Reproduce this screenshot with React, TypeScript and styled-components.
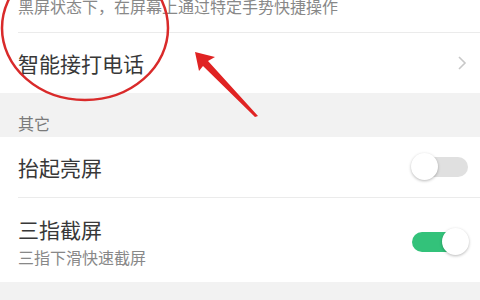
import React from "react";
import styled, { createGlobalStyle } from "styled-components";

const Global = createGlobalStyle`
  html, body { margin: 0; padding: 0; }
  body { width: 480px; height: 300px; overflow: hidden; background: #f2f2f2; }
  * { box-sizing: border-box; }
`;

const Page = styled.div`
  position: relative;
  width: 480px;
  height: 300px;
  overflow: hidden;
  background: #f2f2f2;
  font-family: "Noto Sans CJK SC", "Noto Sans", sans-serif;
`;

const Group = styled.div`
  background: #ffffff;
`;

const Row = styled.div`
  padding-left: 18px;
  background: #ffffff;
`;

const RowInner = styled.div<{ $h: number; $divider?: boolean; $top?: boolean }>`
  height: ${(p) => p.$h}px;
  display: flex;
  align-items: ${(p) => (p.$top ? "flex-start" : "center")};
  justify-content: space-between;
  padding-right: 12px;
  border-bottom: ${(p) => (p.$divider ? "1px solid #ebebeb" : "none")};
`;

const TextCol = styled.div`
  display: flex;
  flex-direction: column;
`;

const Title = styled.div`
  font-size: 21px;
  line-height: 24px;
  color: #383838;
`;

const Sub = styled.div<{ $gap?: number }>`
  font-size: 16px;
  line-height: 18px;
  color: #888888;
  margin-top: ${(p) => p.$gap ?? 0}px;
`;

const SectionLabel = styled.div`
  height: 44px;
  padding: 22px 0 6px 18px;
  font-size: 16px;
  line-height: 16px;
  color: #7a7a7a;
`;

const TallInner = styled.div`
  display: flex;
  align-items: center;
  justify-content: space-between;
  padding: 19px 12px 16px 0;
`;

const Track = styled.div<{ $on: boolean }>`
  position: relative;
  width: 56px;
  height: 20px;
  border-radius: 10px;
  background: ${(p) => (p.$on ? "#33c27a" : "#e0e0e0")};
`;

const Knob = styled.div<{ $on: boolean }>`
  position: absolute;
  top: -4px;
  ${(p) => (p.$on ? "right: -1px;" : "left: -1px;")}
  width: 27px;
  height: 27px;
  border-radius: 50%;
  background: #ffffff;
  box-shadow: 0 1px 3px rgba(0, 0, 0, 0.28);
`;

const Overlay = styled.svg`
  position: absolute;
  left: 0;
  top: 0;
  pointer-events: none;
`;

const Toggle = ({ on }: { on: boolean }) => (
  <Track $on={on}>
    <Knob $on={on} />
  </Track>
);

const Chevron = () => (
  <svg width="12" height="16" viewBox="0 0 12 16">
    <path d="M3 2 L9 8 L3 14" fill="none" stroke="#c8c8c8" strokeWidth="1.6" />
  </svg>
);

export default function App() {
  return (
    <>
      <Global />
      <Page>
        <Group>
          <Row>
            <RowInner $h={33} $divider $top>
              <Sub $gap={-3}>黑屏状态下，在屏幕上通过特定手势快捷操作</Sub>
            </RowInner>
          </Row>
          <Row>
            <RowInner $h={60}>
              <Title>智能接打电话</Title>
              <Chevron />
            </RowInner>
          </Row>
        </Group>
        <SectionLabel>其它</SectionLabel>
        <Group>
          <Row>
            <RowInner $h={61} $divider>
              <Title>抬起亮屏</Title>
              <Toggle on={false} />
            </RowInner>
          </Row>
          <Row>
            <TallInner>
              <TextCol>
                <Title>三指截屏</Title>
                <Sub $gap={7}>三指下滑快速截屏</Sub>
              </TextCol>
              <Toggle on={true} />
            </TallInner>
          </Row>
        </Group>
        <Overlay width="480" height="300" viewBox="0 0 480 300">
          <ellipse cx="85" cy="28" rx="83" ry="72" fill="none" stroke="#d92a2a" strokeWidth="2.5" />
          <polygon
            points="195,52 215,57 208,61 258,116 255,117 203,66 199,71"
            fill="#e02323"
          />
        </Overlay>
      </Page>
    </>
  );
}
